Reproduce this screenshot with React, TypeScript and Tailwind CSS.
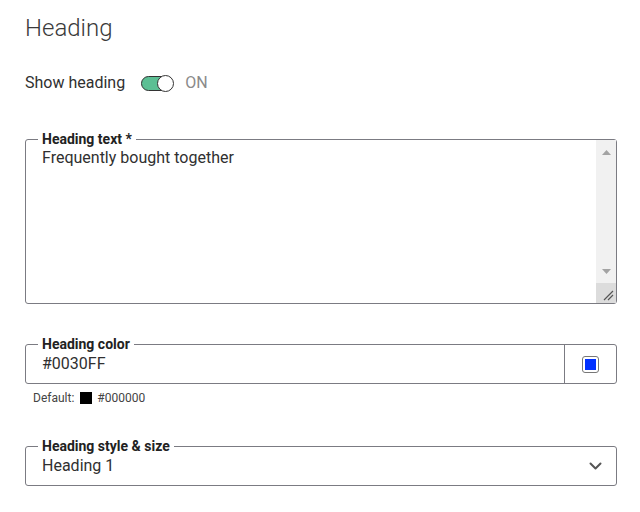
export default function App() {
  return (
    <div
      className="min-h-[512px] w-[640px] bg-white pl-[25px] pr-[23px] pt-[14px] text-[#303030]"
      style={{ fontFamily: "Roboto, 'Liberation Sans', sans-serif" }}
    >
      <h1 className="text-[24px] font-light leading-[28px] text-[#3a3a3a]">Heading</h1>

      <div className="mt-[31px] flex items-center">
        <span className="text-[16px] leading-[20px]">Show heading</span>
        <div className="relative ml-[16px] h-[15px] w-[32px] rounded-full border border-[#333] bg-[#5cbf94]">
          <div className="absolute right-[-2px] top-[-2px] h-[17px] w-[17px] rounded-full border border-[#333] bg-white" />
        </div>
        <span className="ml-[12px] text-[16px] leading-[20px] text-[#8a8a8a]">ON</span>
      </div>

      <fieldset className="mt-[38px] flex h-[173px] rounded-[3px] border border-[#7b7b82] p-0">
        <legend className="ml-[12px] px-[4px] text-[14px] font-bold leading-[16px] text-[#222]">
          Heading text *
        </legend>
        <textarea
          className="mt-[1px] block flex-1 resize-none overflow-hidden pl-[16px] text-[16px] leading-[20px] text-[#303030] outline-none"
          defaultValue="Frequently bought together"
        />
        <div className="-mt-[7px] flex w-[20px] flex-col bg-[#f1f1f1]">
          <div className="flex h-[24px] items-center justify-center">
            <svg width="9" height="5" viewBox="0 0 9 5">
              <path d="M0 5 4.5 0 9 5Z" fill="#a3a3a3" />
            </svg>
          </div>
          <div className="flex-1" />
          <div className="flex h-[24px] items-center justify-center">
            <svg width="9" height="5" viewBox="0 0 9 5">
              <path d="M0 0 4.5 5 9 0Z" fill="#a3a3a3" />
            </svg>
          </div>
          <div className="flex h-[20px] items-end justify-end bg-[#dcdcdc] pb-[2px] pr-[2px]">
            <svg width="11" height="11" viewBox="0 0 11 11" stroke="#555" strokeWidth="1.2">
              <path d="M1 10 10 1M5 10 10 5" />
            </svg>
          </div>
        </div>
      </fieldset>

      <fieldset className="mt-[32px] flex h-[48px] rounded-[3px] border border-[#7b7b82] p-0">
        <legend className="ml-[12px] px-[4px] text-[14px] font-bold leading-[16px] text-[#222]">
          Heading color
        </legend>
        <div className="-mt-[7px] flex flex-1 items-center pl-[16px] text-[16px]">#0030FF</div>
        <div className="-mt-[7px] flex w-[52px] items-center justify-center border-l border-[#7b7b82]">
          <div className="h-[17px] w-[17px] rounded-[3px] border border-[#777] p-[2px]">
            <div className="h-full w-full bg-[#0030ff]" />
          </div>
        </div>
      </fieldset>

      <div className="mt-[6px] flex items-center pl-[8px] text-[12px] leading-[16px] text-[#444]">
        <span>Default:</span>
        <span className="ml-[6px] h-[12px] w-[12px] bg-black" />
        <span className="ml-[5px]">#000000</span>
      </div>

      <fieldset className="mt-[32px] flex h-[48px] rounded-[3px] border border-[#7b7b82] p-0">
        <legend className="ml-[12px] px-[4px] text-[14px] font-bold leading-[16px] text-[#222]">
          Heading style &amp; size
        </legend>
        <div className="-mt-[7px] flex flex-1 items-center justify-between pl-[16px] pr-[14px] text-[16px]">
          <span>Heading 1</span>
          <svg width="13" height="8" viewBox="0 0 13 8" fill="none" stroke="#555" strokeWidth="2" strokeLinecap="round" strokeLinejoin="round">
            <path d="M1.5 1.5 6.5 6.5 11.5 1.5" />
          </svg>
        </div>
      </fieldset>
    </div>
  );
}
